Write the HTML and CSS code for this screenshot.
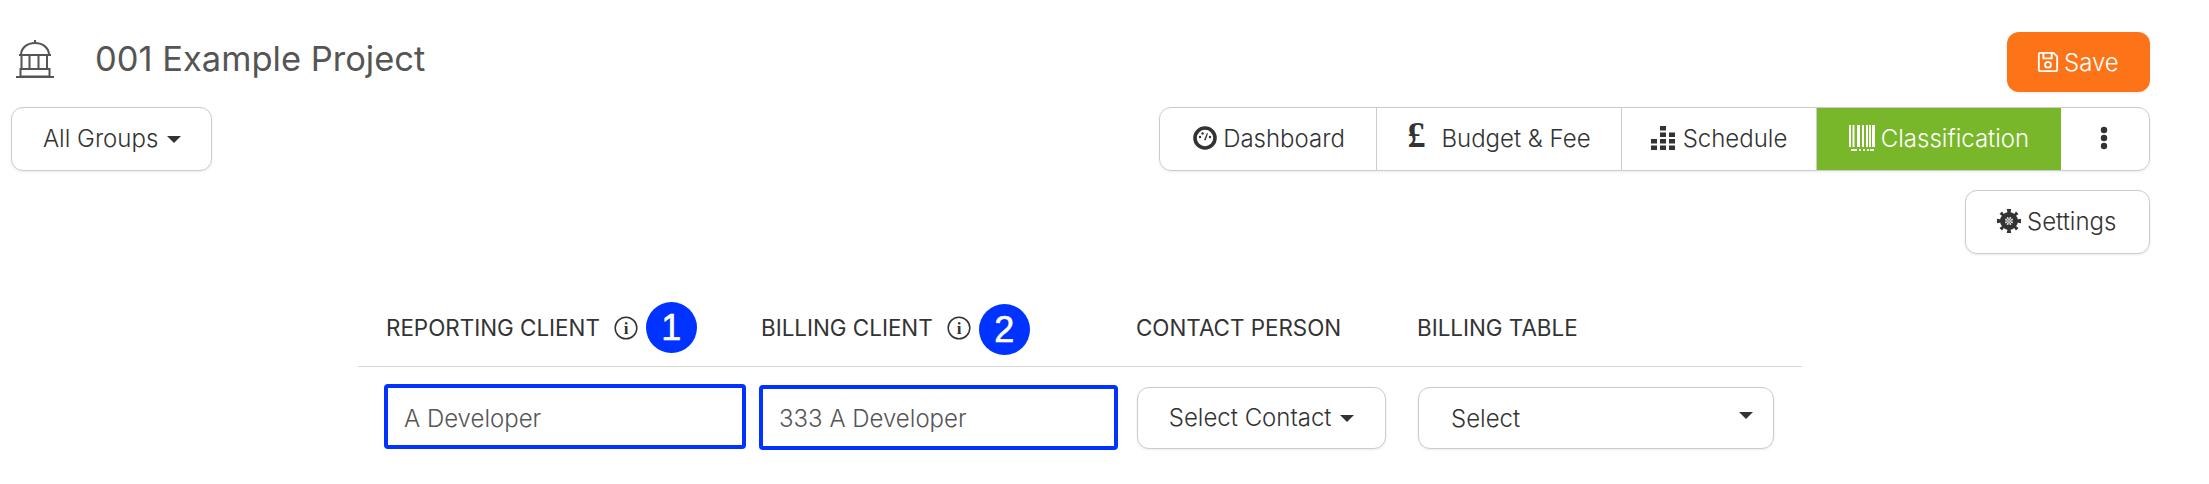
FILE: index.html
```html
<!DOCTYPE html>
<html lang="en">
<head>
  <meta charset="UTF-8">
  <title>001 Example Project</title>
  <link rel="stylesheet" href="styles.css">
</head>
<body>
  <header class="top-row">
    <div class="project">
      <svg class="project-icon" viewBox="0 0 38 38" fill="none" stroke="#555" stroke-width="2">
        <path d="M19 0v3"/>
        <path d="M5 15C5 8 11 3 19 3s14 5 14 12"/>
        <path d="M3 15h32"/>
        <path d="M5.500 15v14M13.500 15v14M22.500 15v14M31 15v14"/>
        <path d="M4.500 29h29v7.500h-29zM0 37h38"/>
      </svg>
      <h1 class="project-title">001 Example Project</h1>
    </div>
    <button type="button" class="btn btn-save">
      <svg class="icon icon-save" viewBox="0 0 24 24" fill="none" stroke="#fff" stroke-width="2">
        <path d="M2 3.500A1.500 1.500 0 0 1 3.500 2h14.500l4 4v14.500a1.500 1.500 0 0 1-1.500 1.500h-17A1.500 1.500 0 0 1 2 20.500z"/>
        <path d="M7 2v6h9V2"/>
        <circle cx="12" cy="15" r="3.200"/>
      </svg>
      Save
    </button>
  </header>

  <div class="nav-row">
    <button type="button" class="btn btn-groups">All Groups <span class="caret"></span></button>
    <nav class="tabs">
      <a class="tab tab-dashboard">
        <svg class="icon" viewBox="0 0 24 24">
          <circle cx="12" cy="12" r="10" fill="none" stroke="#333" stroke-width="3.600"/>
          <circle cx="7" cy="11" r="1.200" fill="#333"/>
          <circle cx="9.500" cy="7.500" r="1.200" fill="#333"/>
          <circle cx="17" cy="11" r="1.200" fill="#333"/>
          <path d="M11 14l3-7 1 .5-2.500 7z" fill="#333"/>
        </svg>
        Dashboard
      </a>
      <a class="tab tab-budget"><span class="pound">£</span> Budget &amp; Fee</a>
      <a class="tab tab-schedule">
        <svg class="icon" viewBox="0 0 24 24" fill="#333">
          <rect x="9" y="0" width="6" height="4.500"/>
          <rect x="9" y="6.500" width="6" height="4.500"/><rect x="18" y="6.500" width="6" height="4.500"/>
          <rect x="0" y="13" width="6" height="4.500"/><rect x="9" y="13" width="6" height="4.500"/><rect x="18" y="13" width="6" height="4.500"/>
          <rect x="0" y="19.500" width="6" height="4.500"/><rect x="9" y="19.500" width="6" height="4.500"/><rect x="18" y="19.500" width="6" height="4.500"/>
        </svg>
        Schedule
      </a>
      <a class="tab tab-active">
        <svg class="icon icon-barcode" viewBox="0 0 26 26" fill="#fff">
          <rect x="0" y="0" width="2" height="22"/><rect x="3.500" y="0" width="2" height="22"/>
          <rect x="8" y="0" width="3" height="22"/><rect x="13" y="0" width="2" height="22"/>
          <rect x="17" y="0" width="2" height="22"/><rect x="20" y="0" width="2" height="22"/><rect x="23" y="0" width="3" height="22"/>
          <rect x="2" y="24" width="6" height="2"/><rect x="10" y="24" width="2" height="2"/>
          <rect x="14" y="24" width="2" height="2"/><rect x="18" y="24" width="2" height="2"/><rect x="21" y="24" width="4" height="2"/>
        </svg>
        Classification
      </a>
      <a class="tab tab-more">
        <svg class="dots" viewBox="0 0 8 24" fill="#333">
          <circle cx="4" cy="4" r="3.200"/><circle cx="4" cy="12" r="3.200"/><circle cx="4" cy="20" r="3.200"/>
        </svg>
      </a>
    </nav>
  </div>

  <div class="settings-row">
    <button type="button" class="btn btn-settings">
      <svg class="icon" viewBox="0 0 24 24">
        <circle cx="12" cy="12" r="6.500" fill="none" stroke="#333" stroke-width="5"/>
        <path d="M12 12L9.800 0h4.400zM12 12L9.800 24h4.400zM12 12L0 9.800v4.400zM12 12L24 9.800v4.400zM12 12L2.500 5 5 2.500zM12 12l9.500 7L19 21.500zM12 12l7-9.500L21.500 5zM12 12l-7 9.500L2.500 19z" fill="#333"/>
      </svg>
      Settings
    </button>
  </div>

  <section class="client-table">
    <div class="cell head">
      <span class="label">REPORTING CLIENT</span>
      <svg class="info" viewBox="0 0 24 24"><circle cx="12" cy="12" r="10.800" fill="none" stroke="#333" stroke-width="1.500"/><text x="12" y="18" text-anchor="middle">i</text></svg>
      <span class="badge">1</span>
    </div>
    <div class="cell head">
      <span class="label">BILLING CLIENT</span>
      <svg class="info" viewBox="0 0 24 24"><circle cx="12" cy="12" r="10.800" fill="none" stroke="#333" stroke-width="1.500"/><text x="12" y="18" text-anchor="middle">i</text></svg>
      <span class="badge badge-low">2</span>
    </div>
    <div class="cell head"><span class="label">CONTACT PERSON</span></div>
    <div class="cell head"><span class="label">BILLING TABLE</span></div>

    <div class="cell body-cell"><input class="field field-one" type="text" value="A Developer"></div>
    <div class="cell body-cell"><input class="field field-two" type="text" value="333 A Developer"></div>
    <div class="cell body-cell plain"><button type="button" class="btn btn-contact">Select Contact <span class="caret"></span></button></div>
    <div class="cell body-cell plain"><button type="button" class="btn btn-select">Select <span class="caret"></span></button></div>
  </section>
</body>
</html>
```

FILE: styles.css
```css
* {
  box-sizing: border-box;
}
body {
  margin: 0;
  padding: 0 59px 0 11px;
  background: #fff;
  color: #333;
  font-family: Inter, "Open Sans", sans-serif;
  font-weight: 300;
  font-size: 24px;
  overflow: hidden;
}
button, input {
  font: inherit;
}
.top-row {
  display: flex;
  align-items: flex-start;
  justify-content: space-between;
  padding-top: 32px;
  height: 107px;
}
.project {
  display: flex;
  align-items: center;
  gap: 41px;
  padding: 6px 0 0 5px;
}
.project-icon {
  width: 38px;
  height: 38px;
}
.project-title {
  margin: 0;
  font-size: 34.500px;
  font-weight: 400;
  color: #555;
}
.btn {
  height: 64px;
  padding: 0 32px 2px;
  background: #fff;
  border: 1px solid #ccc;
  border-radius: 12px;
  box-shadow: 0 1px 3px rgba(0, 0, 0, 0.08);
  color: #333;
  white-space: nowrap;
}
.btn-groups {
  width: 201px;
  padding: 0 0 2px 1px;
}
.btn-save {
  display: flex;
  align-items: center;
  gap: 5px;
  width: 143px;
  height: 60px;
  padding: 0 0 0 30px;
  background: #fc7417;
  border: 0;
  color: #fff;
}
.icon {
  width: 24px;
  height: 24px;
  flex: none;
}
.icon-save {
  width: 22px;
  height: 22px;
}
.icon-barcode {
  width: 26px;
  height: 26px;
}
.caret {
  display: inline-block;
  margin-left: 2px;
  vertical-align: middle;
  border-top: 7px solid #333;
  border-left: 7px solid transparent;
  border-right: 7px solid transparent;
}
.nav-row {
  display: flex;
  justify-content: space-between;
}
.tabs {
  display: flex;
  height: 64px;
  border: 1px solid #ccc;
  border-radius: 12px;
  box-shadow: 0 1px 3px rgba(0, 0, 0, 0.08);
  overflow: hidden;
}
.tab {
  display: flex;
  align-items: center;
  justify-content: center;
  gap: 6px;
  padding-bottom: 2px;
  border-right: 1px solid #ccc;
}
.tab-dashboard {
  width: 217px;
  padding-left: 2px;
}
.tab-budget {
  width: 245px;
}
.tab-schedule {
  width: 195px;
  gap: 8px;
}
.tab-active {
  width: 244px;
  margin: -1px 0;
  background: #78b72a;
  border-right: 0;
  color: #fff;
}
.tab-more {
  width: 88px;
  padding-right: 3px;
  border-right: 0;
}
.pound {
  margin: -6px 10px 0 0;
  font-family: "Liberation Serif", serif;
  font-weight: 700;
  font-size: 36px;
  line-height: 1;
}
.dots {
  width: 8px;
  height: 24px;
}
.settings-row {
  display: flex;
  justify-content: flex-end;
  margin-top: 19px;
}
.btn-settings {
  display: flex;
  align-items: center;
  gap: 6px;
  width: 185px;
  padding: 0 0 2px 31px;
}
.client-table {
  display: grid;
  grid-template-columns: 375px 375px 281px 413px;
  margin: 44px 0 0 347px;
  width: 1444px;
}
.cell {
  display: flex;
  align-items: center;
}
.head {
  height: 69px;
  padding: 0 0 9px 28px;
  border-bottom: 1px solid #d8d8d8;
  font-size: 22.400px;
  font-weight: 400;
}
.info {
  width: 24px;
  height: 24px;
  margin-left: 14px;
}
.info text {
  font-family: "Liberation Serif", serif;
  font-size: 17px;
  font-weight: 700;
  fill: #333;
}
.badge {
  width: 51px;
  height: 51px;
  margin-left: 8px;
  border-radius: 50%;
  background: #0033ff;
  color: #fff;
  font-family: "Liberation Sans", sans-serif;
  font-size: 36px;
  font-weight: 400;
  -webkit-text-stroke: 0.6px #fff;
  line-height: 51px;
  text-align: center;
}
.badge-low {
  margin-top: 4px;
}
.body-cell {
  height: 84px;
  padding-left: 26px;
  align-items: flex-start;
}
.field {
  flex: none;
  height: 65px;
  margin-top: 17px;
  padding: 2px 16px 0;
  border: 4px solid #0033ff;
  border-radius: 4px;
  color: #555;
  outline: 0;
}
.field-one {
  width: 362px;
  padding-top: 3px;
}
.field-two {
  width: 359px;
  margin-top: 18px;
}
.plain {
  padding-left: 29px;
}
.btn-contact {
  width: 249px;
  height: 62px;
  margin-top: 20px;
  padding: 0 0 2px;
}
.btn-select {
  display: flex;
  align-items: center;
  justify-content: space-between;
  width: 356px;
  height: 62px;
  margin-top: 20px;
  padding: 0 20px 0 32px;
}
.btn-select .caret {
  margin-bottom: 6px;
}
```
